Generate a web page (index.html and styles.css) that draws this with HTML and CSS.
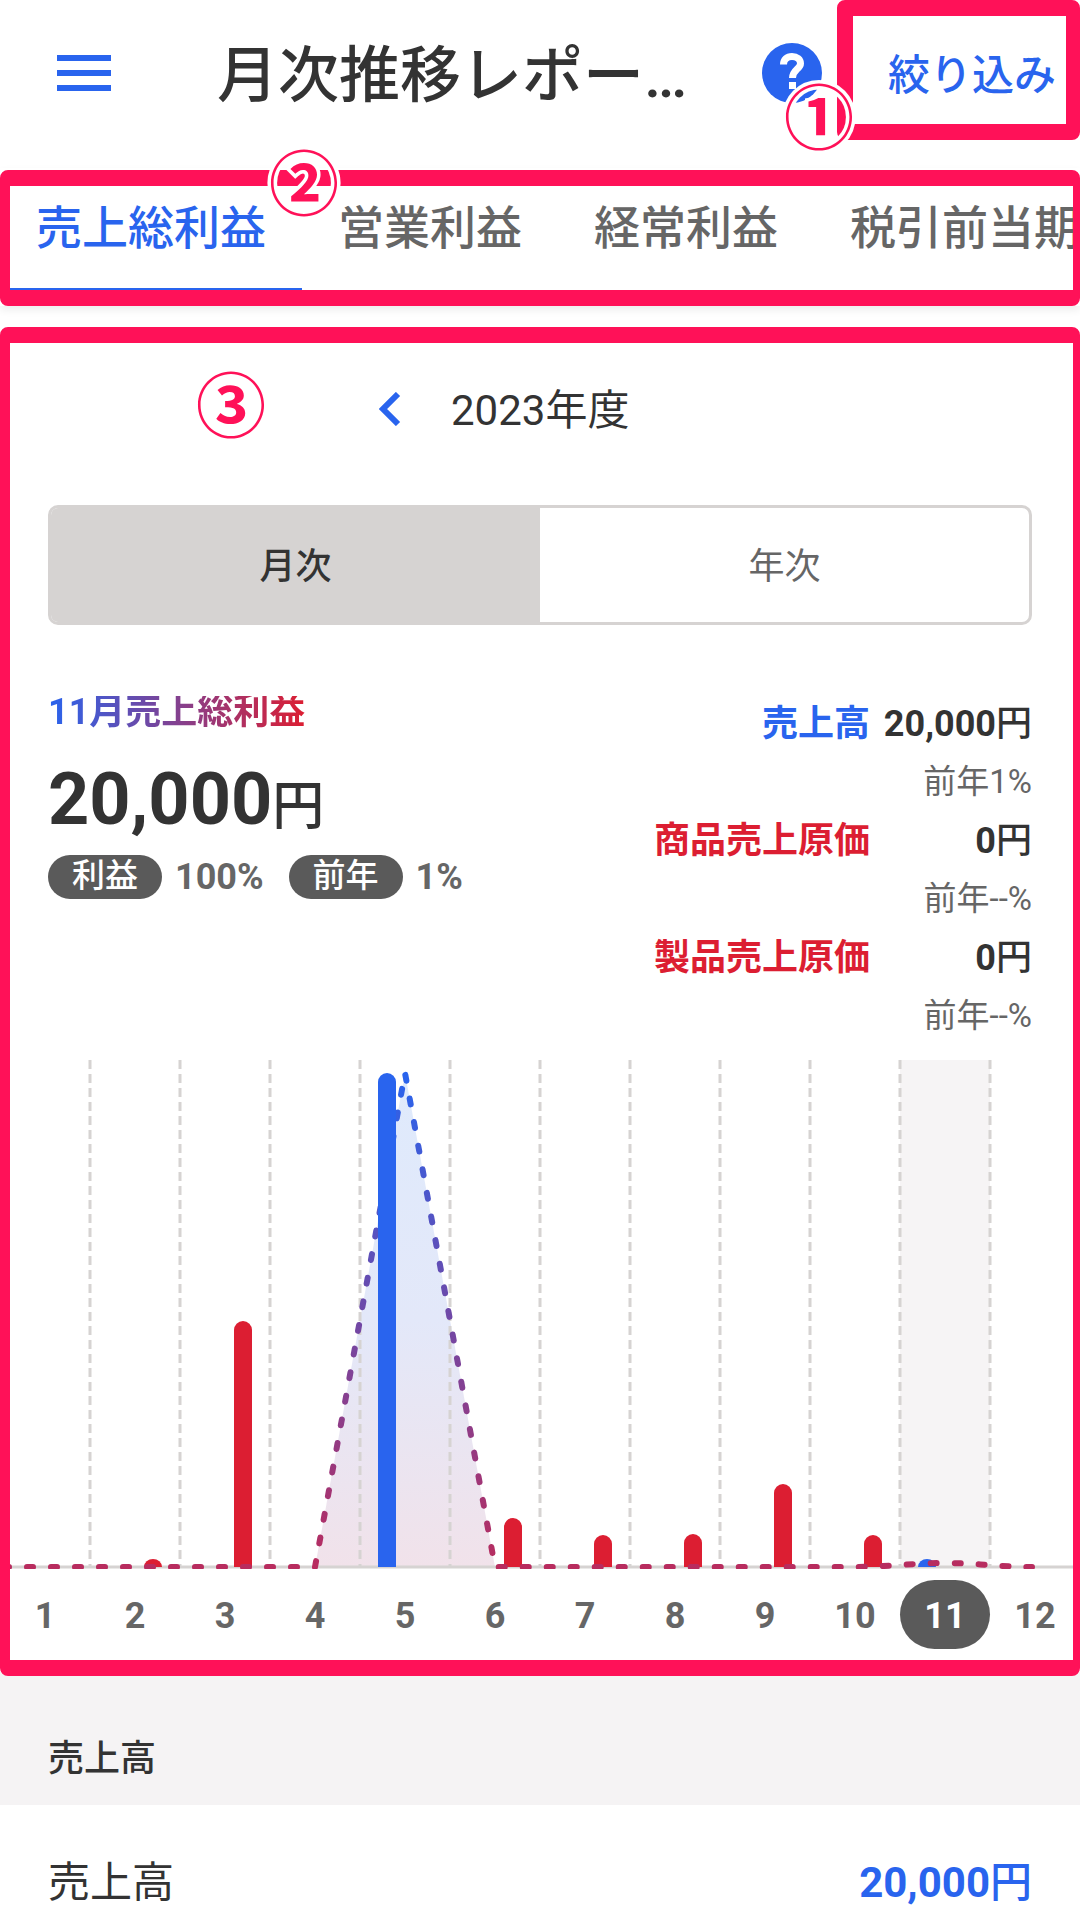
FILE: index.html
```html
<!DOCTYPE html>
<html lang="ja">
<head>
    <meta charset="UTF-8">
    <meta name="viewport" content="width=device-width, initial-scale=1.0">
    <title>月次推移レポート</title>
    <link rel="stylesheet" href="styles.css">
</head>
<body>
    <div class="screen">
        <header class="header">
            <svg class="menu-icon" viewBox="0 0 54 36"><path d="M0 0h54v6H0zM0 15h54v6H0zM0 30h54v6H0z"/></svg>
            <h1 class="title">月次推移レポー…</h1>
            <svg class="help-icon" viewBox="0 0 60 60">
                <circle class="help-disc" cx="30" cy="30" r="30"/>
                <path class="help-mark" d="M21.5 21.5C21.5 16.5 25 13.5 30 13.5C35 13.5 38.5 16.5 38.5 20.5C38.5 26 30.5 26.5 30.5 35"/>
                <rect class="help-dot" x="27" y="39" width="7" height="7"/>
            </svg>
            <span class="filter-button">絞り込み</span>
        </header>

        <nav class="tabs">
            <span class="tab active">売上総利益</span>
            <span class="tab">営業利益</span>
            <span class="tab">経常利益</span>
            <span class="tab">税引前当期純利益</span>
        </nav>

        <main class="report">
            <div class="year-row">
                <svg class="back-icon" viewBox="0 0 22 34"><path d="M19 2L4 17l15 15"/></svg>
                <span class="year-label">2023年度</span>
            </div>

            <div class="segment">
                <span class="segment-item active">月次</span>
                <span class="segment-item">年次</span>
            </div>

            <section class="metrics">
                <div class="metrics-left">
                    <p class="metric-title">11月売上総利益</p>
                    <p class="metric-amount">20,000<span class="yen">円</span></p>
                    <div class="metric-tags">
                        <span class="pill">利益</span>
                        <span class="tag-value">100%</span>
                        <span class="pill">前年</span>
                        <span class="tag-value">1%</span>
                    </div>
                </div>
                <div class="metrics-right">
                    <span class="label blue">売上高</span>
                    <span class="value">20,000<span class="yen">円</span></span>
                    <span class="prev">前年1%</span>
                    <span class="label red">商品売上原価</span>
                    <span class="value">0<span class="yen">円</span></span>
                    <span class="prev">前年--%</span>
                    <span class="label red">製品売上原価</span>
                    <span class="value">0<span class="yen">円</span></span>
                    <span class="prev">前年--%</span>
                </div>
            </section>

            <svg class="chart" viewBox="0 0 1080 509">
                <defs>
                    <linearGradient id="lineGrad" gradientUnits="userSpaceOnUse" x1="0" y1="13" x2="0" y2="507">
                        <stop offset="0" stop-color="#2964ee"/>
                        <stop offset="1" stop-color="#b82c5e"/>
                    </linearGradient>
                    <linearGradient id="areaGrad" gradientUnits="userSpaceOnUse" x1="0" y1="13" x2="0" y2="507">
                        <stop offset="0" stop-color="#dfeafc"/>
                        <stop offset="0.5" stop-color="#e3e8f9"/>
                        <stop offset="1" stop-color="#f1e2ea"/>
                    </linearGradient>
                </defs>
                <rect class="current-month" x="900" y="0" width="90" height="507"/>
                <path class="area" d="M315 507L405 13L495 507Z"/>
                <path class="grid-lines" d="M90 0V507M180 0V507M270 0V507M360 0V507M450 0V507M540 0V507M630 0V507M720 0V507M810 0V507M900 0V507M990 0V507"/>
                <path class="baseline" d="M0 507H1080"/>
                <!-- 赤: 原価 -->
                <path class="bar-red" d="M144 507a9 8 0 0 1 18 0z"/>
                <path class="bar-red" d="M234 507V270a9 9 0 0 1 18 0V507z"/>
                <path class="bar-red" d="M504 507V467a9 9 0 0 1 18 0V507z"/>
                <path class="bar-red" d="M594 507V484a9 9 0 0 1 18 0V507z"/>
                <path class="bar-red" d="M684 507V483a9 9 0 0 1 18 0V507z"/>
                <path class="bar-red" d="M774 507V433a9 9 0 0 1 18 0V507z"/>
                <path class="bar-red" d="M864 507V484a9 9 0 0 1 18 0V507z"/>
                <path class="bar-blue" d="M918 507a9 8 0 0 1 18 0z"/>
                <path class="trend" d="M3 507H315L405 13L495 507H855C885 507 915 503 945 503C975 503 1000 507 1032 507"/>
                <path class="bar-blue" d="M378 507V22a9 9 0 0 1 18 0V507z"/>
            </svg>

            <div class="months">
                <span>1</span><span>2</span><span>3</span><span>4</span><span>5</span><span>6</span>
                <span>7</span><span>8</span><span>9</span><span>10</span><span class="active">11</span><span>12</span>
            </div>
        </main>

        <section class="detail">
            <h2 class="detail-head">売上高</h2>
            <div class="detail-row">
                <span>売上高</span>
                <span class="detail-value">20,000<span class="yen">円</span></span>
            </div>
        </section>

        <!-- 注釈の枠と番号 -->
        <div class="note-box note-box-filter"></div>
        <div class="note-box note-box-tabs"></div>
        <div class="note-box note-box-report"></div>
        <span class="note-num note-num-1">①</span>
        <span class="note-num note-num-2">②</span>
        <span class="note-num note-num-3">③</span>
    </div>
</body>
</html>
```

FILE: styles.css
```css
* {
    margin: 0;
    padding: 0;
    box-sizing: border-box;
}

body {
    font-family: Roboto, "Noto Sans CJK JP", sans-serif;
    background: #fff;
    color: #333;
}

.screen {
    position: relative;
    width: 1080px;
    height: 1919px;
    overflow: hidden;
}

/* ヘッダー */
.header {
    display: flex;
    align-items: center;
    height: 146px;
}

.menu-icon {
    width: 54px;
    height: 36px;
    margin-left: 57px;
    fill: #2964ee;
}

.title {
    width: 503px;
    margin: 0 0 6px 106px;
    font-size: 61px;
    font-weight: 500;
    white-space: nowrap;
}

.help-icon {
    width: 60px;
    height: 60px;
    margin-left: 42px;
}

.help-disc {
    fill: #2964ee;
}

.help-mark {
    fill: none;
    stroke: #fff;
    stroke-width: 7;
}

.help-dot {
    fill: #fff;
}

.filter-button {
    margin: 0 0 4px 66px;
    font-size: 42px;
    font-weight: 500;
    color: #2964ee;
}

/* タブ */
.tabs {
    display: flex;
    height: 138px;
    margin-top: 22px;
    overflow: hidden;
    box-shadow: 0 4px 8px rgba(0, 0, 0, 0.07);
}

.tab {
    flex: none;
    height: 123px;
    padding: 0 36px;
    line-height: 120px;
    font-size: 46px;
    font-weight: 500;
    color: #666;
}

.tab.active {
    color: #2964ee;
    border-bottom: 3px solid #2964ee;
}

/* 年度切り替え */
.report {
    margin-top: 37px;
}

.year-row {
    display: flex;
    align-items: center;
    height: 132px;
    padding-left: 379px;
    font-size: 42px;
}

.back-icon {
    width: 22px;
    height: 34px;
    margin-right: 50px;
    fill: none;
    stroke: #2964ee;
    stroke-width: 6;
}

.year-label {
    margin-bottom: 6px;
}

.segment {
    display: flex;
    height: 120px;
    margin: 30px 48px 0;
    border: 3px solid #d6d3d2;
    border-radius: 10px;
    overflow: hidden;
}

.segment-item {
    flex: 1;
    line-height: 118px;
    text-align: center;
    font-size: 36px;
    color: #666;
}

.segment-item.active {
    background: #d6d3d2;
    color: #333;
    font-weight: 500;
}

/* 数値 */
.metrics {
    display: flex;
    justify-content: space-between;
    height: 351px;
    margin-top: 69px;
    padding: 0 48px;
}

.metric-title {
    display: inline-block;
    margin-top: 2px;
    line-height: 32px;
    font-size: 36px;
    font-weight: 700;
    background: linear-gradient(90deg, #2964ee 0%, #dc1e32 100%);
    -webkit-background-clip: text;
    background-clip: text;
    color: transparent;
}

.metric-amount {
    margin-top: 30px;
    line-height: 84px;
    font-size: 72px;
    font-weight: 700;
}

.metric-amount .yen {
    font-size: 52px;
    font-weight: 500;
}

.yen {
    font-weight: 500;
}

.metric-tags {
    display: flex;
    align-items: center;
    margin-top: 6px;
}

.pill {
    width: 114px;
    height: 44px;
    line-height: 42px;
    text-align: center;
    border-radius: 22px;
    background: #5a5a5a;
    color: #fff;
    font-size: 33px;
    font-weight: 500;
}

.tag-value {
    margin: 0 25px 0 13px;
    font-size: 36px;
    font-weight: 700;
    color: #666;
}

.metrics-right {
    display: grid;
    grid-template-columns: auto 162px;
    grid-auto-rows: 58.5px;
    align-items: center;
    margin-top: -3px;
    text-align: right;
    font-size: 36px;
}

.label {
    font-weight: 700;
}

.blue {
    color: #2964ee;
}

.red {
    color: #dc1e32;
}

.value {
    font-weight: 700;
}

.prev {
    grid-column: 1 / 3;
    font-size: 33px;
    color: #666;
}

/* グラフ */
.chart {
    display: block;
    width: 1080px;
    height: 509px;
    margin-top: 15px;
}

.current-month {
    fill: #f6f4f5;
}

.area {
    fill: url(#areaGrad);
}

.grid-lines {
    fill: none;
    stroke: #d6d3d2;
    stroke-width: 3;
    stroke-dasharray: 9 5;
}

.baseline {
    fill: none;
    stroke: #d6d3d2;
    stroke-width: 3;
}

.bar-red {
    fill: #dc1e32;
}

.bar-blue {
    fill: #2964ee;
}

.trend {
    fill: none;
    stroke: url(#lineGrad);
    stroke-width: 6;
    stroke-linecap: round;
    stroke-dasharray: 6 18;
}

.months {
    display: grid;
    grid-template-columns: repeat(12, 90px);
    margin-top: 11px;
}

.months span {
    height: 69px;
    line-height: 72px;
    text-align: center;
    font-size: 36px;
    font-weight: 700;
    color: #666;
}

.months .active {
    border-radius: 35px;
    background: #5a5a5a;
    color: #fff;
}

/* 明細 */
.detail {
    margin-top: 23px;
}

.detail-head {
    height: 133px;
    padding: 64px 48px 0;
    line-height: 46px;
    font-size: 36px;
    font-weight: 500;
    background: #f5f3f4;
}

.detail-row {
    display: flex;
    justify-content: space-between;
    padding: 54px 48px 0;
    line-height: 48px;
    font-size: 42px;
}

.detail-value {
    font-weight: 700;
    color: #2964ee;
}

/* 注釈 */
.note-box {
    position: absolute;
    border: 16px solid #ff1158;
    border-radius: 8px;
}

.note-box-filter {
    left: 837px;
    top: 0;
    width: 243px;
    height: 140px;
    border-right-width: 14px;
}

.note-box-tabs {
    left: 0;
    top: 170px;
    width: 1080px;
    height: 136px;
    border-left-width: 10px;
    border-right-width: 7px;
}

.note-box-report {
    left: 0;
    top: 327px;
    width: 1080px;
    height: 1349px;
    border-left-width: 10px;
    border-right-width: 7px;
}

.note-num {
    position: absolute;
    width: 66px;
    line-height: 66px;
    text-align: center;
    font-family: "Noto Sans CJK JP", sans-serif;
    font-size: 70px;
    font-weight: 700;
    color: #ff1158;
    -webkit-text-stroke: 7px #fff;
    paint-order: stroke fill;
}

.note-num-1 {
    left: 784px;
    top: 81px;
}

.note-num-2 {
    left: 269px;
    top: 147px;
}

.note-num-3 {
    left: 196px;
    top: 369px;
}
```
